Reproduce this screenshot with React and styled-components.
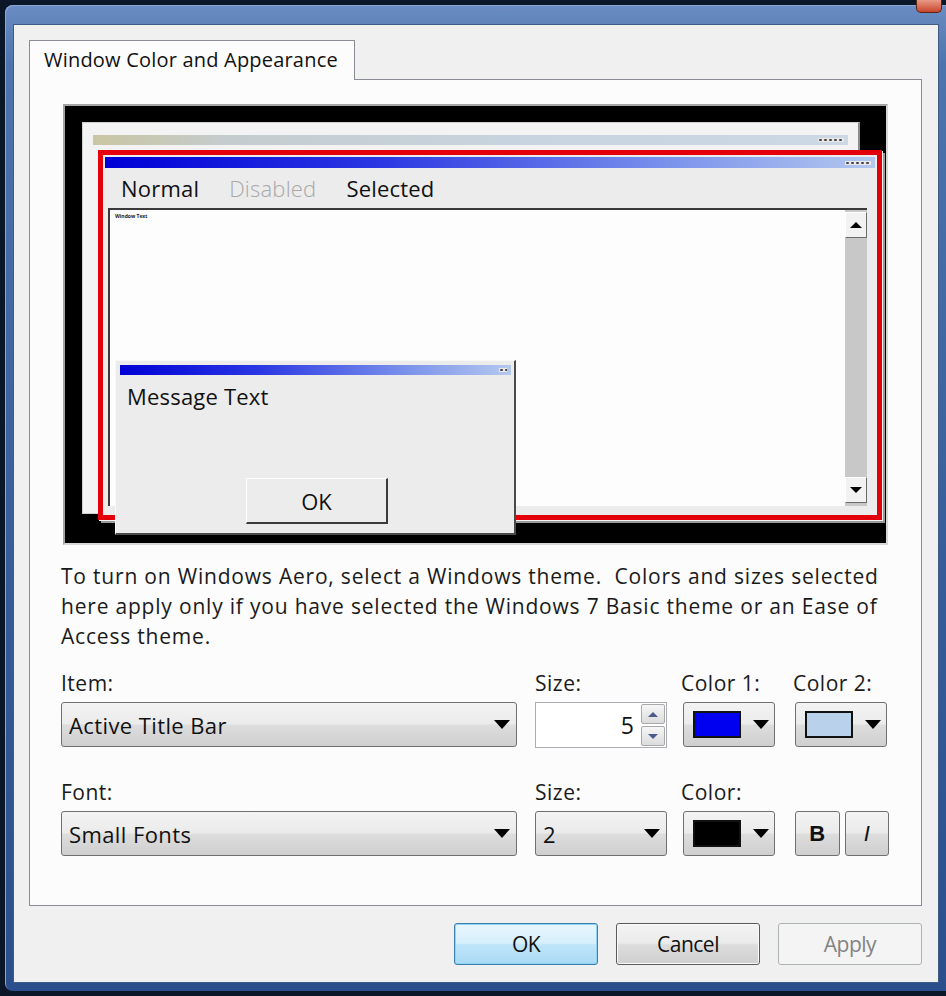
import React from 'react';
import styled, { createGlobalStyle } from 'styled-components';

const GlobalStyle = createGlobalStyle`
  html, body { margin: 0; padding: 0; }
  body {
    width: 946px;
    height: 996px;
    overflow: hidden;
    background: #0c1629;
    font-family: "Open Sans", "Noto Sans", sans-serif;
  }
`;

const Screen = styled.div`
  width: 946px;
  height: 996px;
  box-sizing: border-box;
  padding: 5px 0 5px 5px;
  background: #0c1629;
`;

const Frame = styled.div`
  position: relative;
  height: 100%;
  box-sizing: border-box;
  padding: 19px 7px 8px 8px;
  border-radius: 8px 0 0 8px;
  background: linear-gradient(180deg, #6a8cc2 0%, #4d74ad 6%, #355c98 60%, #2a4f8c 100%);
  box-shadow: inset 1px 1px 0 #8aa6d2;
`;

const CloseCap = styled.div`
  position: absolute;
  top: -5px;
  right: 4px;
  width: 24px;
  height: 12px;
  border-radius: 0 0 5px 5px;
  background: linear-gradient(180deg, #e89a86 0%, #c8452c 100%);
  border: 1px solid #5a2418;
  border-top: none;
`;

const Client = styled.div`
  height: 100%;
  box-sizing: border-box;
  display: flex;
  flex-direction: column;
  padding: 15px 16px 0 15px;
  background: #f0f0f0;
  border: 1px solid #3f5c86;
`;

const TabStrip = styled.div`
  display: flex;
`;

const Tab = styled.div`
  height: 40px;
  box-sizing: border-box;
  padding: 5px 16px 0 14px;
  background: #fcfcfc;
  border: 1px solid #898c95;
  border-bottom: none;
  margin-bottom: -1px;
  position: relative;
  z-index: 1;
  font-size: 20px;
  letter-spacing: 0.2px;
  color: #111;
`;

const Panel = styled.div`
  height: 827px;
  box-sizing: border-box;
  padding: 24px 33px 0 33px;
  background: #fcfcfc;
  border: 1px solid #898c95;
`;

/* ---------- preview canvas ---------- */

const Preview = styled.div`
  position: relative;
  width: 825px;
  height: 441px;
  box-sizing: border-box;
  background: #000;
  border: 2px solid #a4a4a4;
  border-right-color: #d8d8d8;
  border-bottom-color: #d8d8d8;
  overflow: hidden;
`;

const BackWindow = styled.div`
  position: absolute;
  left: 17px;
  top: 16px;
  width: 778px;
  height: 392px;
  box-sizing: border-box;
  padding: 12px 10px 0 10px;
  background: #f3f3f3;
  border: 1px solid #d0d0d0;
  border-right: 2px solid #8c8c8c;
`;

const TitleBar = styled.div`
  display: flex;
  align-items: center;
  justify-content: flex-end;
  height: ${p => p.$h || 10}px;
  padding-right: 4px;
  background: ${p => p.$active
    ? 'linear-gradient(90deg, #0000d6 0%, #2a36e2 35%, #7f96ec 75%, #b4c8ee 100%)'
    : 'linear-gradient(90deg, #c9c6a2 0%, #c4ccce 18%, #c8d4e0 60%, #ccd8e4 100%)'};
`;

const CaptionDots = styled.span`
  display: block;
  width: ${p => p.$w || 26}px;
  height: 4px;
  background: radial-gradient(circle, #444 0 1px, transparent 1.5px) 0 0 / 5px 4px repeat-x;
  background-color: #e8e8e8;
`;

const FrontWindow = styled.div`
  position: absolute;
  left: 33px;
  top: 44px;
  width: 784px;
  height: 370px;
  box-sizing: border-box;
  display: flex;
  flex-direction: column;
  padding: 2px;
  background: #ececec;
  border: 5px solid #e3000b;
  box-shadow: 1px 1px 0 #f4f4f4, 3px 3px 0 #9a9a9a;
`;

const MenuBar = styled.div`
  display: flex;
  align-items: center;
  gap: 30px;
  height: 40px;
  padding-left: 16px;
  font-size: 22px;
  letter-spacing: 0.2px;
`;

const MenuItem = styled.span`
  color: ${p => (p.$disabled ? '#a8a8a8' : '#111')};
  font-weight: ${p => (p.$disabled ? 300 : 400)};
`;

const TextArea = styled.div`
  position: relative;
  flex: 1;
  display: flex;
  margin: 0 8px 7px 3px;
  background: #fdfdfd;
  border-top: 2px solid #3a3a3a;
  border-left: 2px solid #3a3a3a;
`;

const TinyText = styled.span`
  flex: 1;
  padding: 3px 0 0 5px;
  font-size: 5px;
  font-weight: 700;
  color: #222;
`;

const ScrollBar = styled.div`
  width: 22px;
  display: flex;
  flex-direction: column;
  justify-content: space-between;
  background: #c8c8c8;
  padding: 2px 0 3px;
`;

const ScrollButton = styled.div`
  height: 24px;
  display: flex;
  align-items: center;
  justify-content: center;
  background: #f2f2f2;
  border: 1px solid #fff;
  border-right-color: #6a6a6a;
  border-bottom-color: #6a6a6a;
  &::after {
    content: '';
    border-left: 6px solid transparent;
    border-right: 6px solid transparent;
    ${p => (p.$down ? 'border-top: 6px solid #000;' : 'border-bottom: 6px solid #000;')}
  }
`;

const MessageBox = styled.div`
  position: absolute;
  left: 50px;
  top: 254px;
  width: 401px;
  height: 175px;
  box-sizing: border-box;
  display: flex;
  flex-direction: column;
  padding: 4px 3px 0 4px;
  background: #ececec;
  border: 1px solid #f8f8f8;
  border-right: 2px solid #4a4a4a;
  border-bottom: 2px solid #4a4a4a;
`;

const MessageText = styled.div`
  padding: 6px 0 0 7px;
  height: 97px;
  font-size: 22px;
  letter-spacing: 0.2px;
  color: #111;
`;

const PreviewButton = styled.div`
  align-self: flex-start;
  margin-left: 126px;
  width: 142px;
  height: 46px;
  box-sizing: border-box;
  display: flex;
  align-items: center;
  justify-content: center;
  font-size: 22px;
  color: #111;
  border: 1px solid #fff;
  border-right: 2px solid #3a3a3a;
  border-bottom: 2px solid #3a3a3a;
`;

/* ---------- form ---------- */

const Notice = styled.p`
  margin: 16px 0 0 -2px;
  font-size: 21px;
  line-height: 30px;
  letter-spacing: 0.8px;
  white-space: nowrap;
  color: #1a1a1a;
`;

const FieldGrid = styled.div`
  display: grid;
  grid-template-columns: 474px 148px 112px 94px;
  grid-template-rows: 30px 45px 22px 30px 45px;
  row-gap: 4px;
  margin: 17px 0 0 -2px;
`;

const Label = styled.div`
  font-size: 21px;
  line-height: 30px;
  letter-spacing: 0.5px;
  color: #1a1a1a;
  margin-left: ${p => p.$shift || 0}px;
`;

const Spacer = styled.div`
  grid-column: 1 / -1;
`;

const Arrow = styled.span`
  display: block;
  width: 0;
  height: 0;
  border-left: 8px solid transparent;
  border-right: 8px solid transparent;
  border-top: 9px solid #000;
`;

const Combo = styled.div`
  width: ${p => p.$w}px;
  height: 45px;
  box-sizing: border-box;
  display: flex;
  align-items: center;
  justify-content: space-between;
  padding: 0 6px 0 7px;
  border: 1px solid #707070;
  border-radius: 3px;
  background: linear-gradient(180deg, #f3f3f3 0%, #ebebeb 48%, #dddddd 52%, #cfcfcf 100%);
  font-size: 22px;
  letter-spacing: 0.4px;
  color: #111;
`;

const Spinner = styled.div`
  width: 132px;
  height: 46px;
  display: flex;
`;

const SpinInput = styled.div`
  flex: 1;
  display: flex;
  align-items: center;
  justify-content: flex-end;
  padding-right: 6px;
  background: #fff;
  border: 1px solid #abadb3;
  border-right: none;
  font-size: 23px;
  color: #111;
`;

const SpinButtons = styled.div`
  width: 24px;
  display: flex;
  flex-direction: column;
  gap: 2px;
  padding: 1px;
  border: 1px solid #abadb3;
  border-left: none;
  background: #fff;
`;

const SpinButton = styled.div`
  flex: 1;
  display: flex;
  align-items: center;
  justify-content: center;
  border: 1px solid #a9a9a9;
  border-radius: 2px;
  background: linear-gradient(180deg, #f6f6f6, #dcdcdc);
  &::after {
    content: '';
    border-left: 5px solid transparent;
    border-right: 5px solid transparent;
    ${p => (p.$down ? 'border-top: 5px solid #4c5a8c;' : 'border-bottom: 5px solid #4c5a8c;')}
  }
`;

const ColorButton = styled(Combo)`
  padding: 0 5px 0 9px;
`;

const Swatch = styled.span`
  width: 48px;
  height: 27px;
  box-sizing: border-box;
  border: 2px solid #111;
  background: ${p => p.$color};
`;

const StyleButtons = styled.div`
  display: flex;
  gap: 5px;
`;

const StyleButton = styled.div`
  width: 45px;
  height: 45px;
  box-sizing: border-box;
  display: flex;
  align-items: center;
  justify-content: center;
  border: 1px solid #707070;
  border-radius: 3px;
  background: linear-gradient(180deg, #f3f3f3 0%, #ebebeb 48%, #dddddd 52%, #cfcfcf 100%);
  font-family: "Liberation Sans", Arial, sans-serif;
  font-size: 22px;
  font-weight: ${p => (p.$bold ? 700 : 400)};
  font-style: ${p => (p.$italic ? 'italic' : 'normal')};
  color: #111;
`;

/* ---------- footer ---------- */

const Footer = styled.div`
  display: flex;
  justify-content: flex-end;
  gap: 18px;
  padding-top: 17px;
`;

const DialogButton = styled.div`
  width: 144px;
  height: 42px;
  box-sizing: border-box;
  display: flex;
  align-items: center;
  justify-content: center;
  border-radius: 3px;
  font-size: 21px;
  letter-spacing: -0.5px;
  ${p => p.$variant === 'default' && `
    border: 1px solid #3c7fb1;
    background: linear-gradient(180deg, #e8f6fd 0%, #d6effc 48%, #bfe5fa 52%, #a9daf5 100%);
    box-shadow: inset 0 0 0 1px #8fd3f3;
    color: #111;
  `}
  ${p => p.$variant === 'normal' && `
    border: 1px solid #5a5a5a;
    background: linear-gradient(180deg, #f3f3f3 0%, #ebebeb 48%, #dddddd 52%, #cfcfcf 100%);
    box-shadow: inset 0 0 0 1px #fbfbfb;
    color: #111;
  `}
  ${p => p.$variant === 'disabled' && `
    border: 1px solid #adb2b5;
    background: #f4f4f4;
    color: #838383;
  `}
`;

const App = () => (
  <Screen>
    <GlobalStyle />
    <Frame>
      <CloseCap />
      <Client>
        <TabStrip>
          <Tab>Window Color and Appearance</Tab>
        </TabStrip>
        <Panel>
          <Preview>
            <BackWindow>
              <TitleBar>
                <CaptionDots />
              </TitleBar>
            </BackWindow>
            <FrontWindow>
              <TitleBar $active $h={11}>
                <CaptionDots />
              </TitleBar>
              <MenuBar>
                <MenuItem>Normal</MenuItem>
                <MenuItem $disabled>Disabled</MenuItem>
                <MenuItem>Selected</MenuItem>
              </MenuBar>
              <TextArea>
                <TinyText>Window Text</TinyText>
                <ScrollBar>
                  <ScrollButton />
                  <ScrollButton $down />
                </ScrollBar>
              </TextArea>
            </FrontWindow>
            <MessageBox>
              <TitleBar $active>
                <CaptionDots $w={8} />
              </TitleBar>
              <MessageText>Message Text</MessageText>
              <PreviewButton>OK</PreviewButton>
            </MessageBox>
          </Preview>

          <Notice>
            To turn on Windows Aero, select a Windows theme.&nbsp; Colors and sizes selected<br />
            here apply only if you have selected the Windows 7 Basic theme or an Ease of<br />
            Access theme.
          </Notice>

          <FieldGrid>
            <Label>Item:</Label>
            <Label>Size:</Label>
            <Label $shift={-2}>Color 1:</Label>
            <Label $shift={-2}>Color 2:</Label>

            <Combo $w={456}>Active Title Bar<Arrow /></Combo>
            <Spinner>
              <SpinInput>5</SpinInput>
              <SpinButtons>
                <SpinButton />
                <SpinButton $down />
              </SpinButtons>
            </Spinner>
            <ColorButton $w={92}><Swatch $color="#0000f0" /><Arrow /></ColorButton>
            <ColorButton $w={92}><Swatch $color="#b9d1ea" /><Arrow /></ColorButton>

            <Spacer />

            <Label>Font:</Label>
            <Label>Size:</Label>
            <Label $shift={-2}>Color:</Label>
            <div />

            <Combo $w={456}>Small Fonts<Arrow /></Combo>
            <Combo $w={132}>2<Arrow /></Combo>
            <ColorButton $w={92}><Swatch $color="#000" /><Arrow /></ColorButton>
            <StyleButtons>
              <StyleButton $bold>B</StyleButton>
              <StyleButton $italic>I</StyleButton>
            </StyleButtons>
          </FieldGrid>
        </Panel>
        <Footer>
          <DialogButton $variant="default">OK</DialogButton>
          <DialogButton $variant="normal">Cancel</DialogButton>
          <DialogButton $variant="disabled">Apply</DialogButton>
        </Footer>
      </Client>
    </Frame>
  </Screen>
);

export default App;
